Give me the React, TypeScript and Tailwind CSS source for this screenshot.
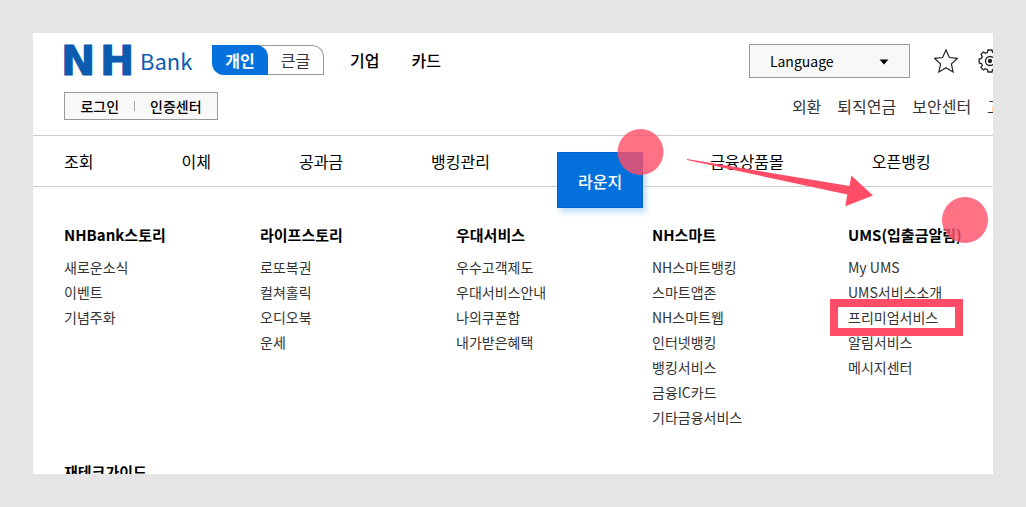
import { useState } from 'react'

const mainMenu = ['조회', '이체', '공과금', '뱅킹관리', '라운지', '금융상품몰', '오픈뱅킹']

const utilityLinks = ['외환', '퇴직연금', '보안센터', '고객센터']

const menuGroups = [
	{ title: 'NHBank스토리', items: ['새로운소식', '이벤트', '기념주화'] },
	{ title: '라이프스토리', items: ['로또복권', '컬쳐홀릭', '오디오북', '운세'] },
	{ title: '우대서비스', items: ['우수고객제도', '우대서비스안내', '나의쿠폰함', '내가받은혜택'] },
	{
		title: 'NH스마트',
		items: ['NH스마트뱅킹', '스마트앱존', 'NH스마트웹', '인터넷뱅킹', '뱅킹서비스', '금융IC카드', '기타금융서비스'],
	},
	{
		title: 'UMS(입출금알림)',
		items: ['My UMS', 'UMS서비스소개', '프리미엄서비스', '알림서비스', '메시지센터'],
	},
	{ title: '재테크가이드', items: [] },
]

export default function App() {
	const [active, setActive] = useState('라운지')

	return (
		<div className="flex h-screen bg-[#e5e5e5] p-[33px] font-['Noto_Sans_CJK_KR',sans-serif] text-black">
			<div className="relative min-w-0 flex-1 overflow-hidden bg-white">
				<Header />
				<MainNav active={active} onSelect={setActive} />
				<SubMenu />
				<Annotations />
			</div>
		</div>
	)
}

function Header() {
	return (
		<header className="flex h-[102px] justify-between pt-[11px] pl-[31px]">
			<div>
				<div className="flex h-8 items-center">
					<Logo />
					<div className="ml-5 flex h-[30px] text-base leading-7">
						<button className="relative z-10 w-14 rounded-tr-xl rounded-bl-xl bg-[#0470dc] font-bold text-white">개인</button>
						<button className="-ml-3 w-[68px] rounded-tr-xl border border-l-0 border-[#999] pl-3 text-[#333]">큰글</button>
					</div>
					<a href="#" className="ml-[26px] text-base font-medium">기업</a>
					<a href="#" className="ml-8 text-base font-medium">카드</a>
				</div>
				<div className="mt-4 flex h-7 w-[154px] items-center justify-center gap-[15px] border border-[#999] bg-[#f8f8f8] text-sm font-medium">
					<a href="#">로그인</a>
					<span className="h-[10px] w-px bg-[#aaa]" />
					<a href="#">인증센터</a>
				</div>
			</div>

			{/* Runs past the right edge of the panel */}
			<div className="-mr-[53px] shrink-0">
				<div className="-ml-[43px] flex h-[34px] items-center">
					<div className="relative">
						<select
							aria-label="Language"
							className="h-[34px] w-[161px] appearance-none border border-[#999] bg-[#f8f8f8] pl-5 text-sm"
						>
							<option>Language</option>
						</select>
						<svg className="pointer-events-none absolute top-[15px] right-[21px]" width="10" height="6" viewBox="0 0 10 6">
							<path d="M0.5 0.5h9L5 5.5z" fill="#000" />
						</svg>
					</div>
					<button aria-label="즐겨찾기" className="ml-6">
						<StarIcon />
					</button>
					<button aria-label="설정" className="ml-5">
						<GearIcon />
					</button>
				</div>
				<nav className="mt-4 flex gap-4 text-base leading-6 text-[#333]">
					{utilityLinks.map((link) => (
						<a key={link} href="#">{link}</a>
					))}
				</nav>
			</div>
		</header>
	)
}

function Logo() {
	return (
		<a href="#" className="flex w-32 items-center text-[#0b5cb0]">
			<svg className="overflow-visible" width="128" height="32" viewBox="0 0 128 32" fill="currentColor">
				<text x="-3" y="31" fontFamily="DejaVu Sans" fontWeight="700" fontSize="41" stroke="currentColor" strokeWidth="1">N</text>
				<text x="36" y="31" fontFamily="DejaVu Sans" fontWeight="700" fontSize="41" stroke="currentColor" strokeWidth="1">H</text>
				<text x="76" y="26" fontFamily="Noto Sans CJK KR" fontSize="22">Bank</text>
			</svg>
		</a>
	)
}

function MainNav({ active, onSelect }: { active: string; onSelect: (item: string) => void }) {
	return (
		<nav className="flex h-[52px] items-start gap-[88px] border-y border-[#ccc] pl-[31px] text-base whitespace-nowrap">
			{mainMenu.map((item) =>
				item === active ? (
					<button
						key={item}
						className="relative -mx-[21px] mt-4 h-14 shrink-0 border border-[#0560cf] bg-[#0470dc] px-5 pt-px font-medium text-white shadow-[3px_4px_6px_#bcdcf5]"
					>
						{item}
					</button>
				) : (
					<button key={item} onClick={() => onSelect(item)} className="h-[50px] shrink-0">
						{item}
					</button>
				),
			)}
		</nav>
	)
}

function SubMenu() {
	return (
		<div className="-mr-[51px] grid grid-cols-5 gap-y-[30px] pt-9 pl-[31px]">
			{menuGroups.map((group) => (
				<section key={group.title}>
					<h2 className="mb-2 text-[15px] leading-6 font-bold">{group.title}</h2>
					<ul className="text-sm leading-[25px] text-[#333]">
						{group.items.map((item) => (
							<li key={item}>
								<a href="#">{item}</a>
							</li>
						))}
					</ul>
				</section>
			))}
		</div>
	)
}

// Red guide marks drawn over the menu
function Annotations() {
	return (
		<svg className="pointer-events-none absolute top-0 left-0" width="960" height="441" viewBox="0 0 960 441" fill="#ff4d67">
			<circle cx="607.5" cy="119" r="23" opacity="0.8" />
			<circle cx="932" cy="187" r="23" opacity="0.8" />
			<path d="M654 126L816.5 153L818.300 142.500L840 162.500L812.300 173.300L814.300 161.500L654 127z" />
			<rect x="801" y="270" width="125" height="29" fill="none" stroke="#ff4d67" strokeWidth="8" />
		</svg>
	)
}

function StarIcon() {
	return (
		<svg width="24" height="24" viewBox="0 0 24 24" fill="none" stroke="#222" strokeWidth="1.2">
			<path d="M12 1l3.400 7.500 8 .9-6 5.500 1.700 8.100-7.100-4.200L4.900 23l1.700-8.100-6-5.500 8-.9z" />
		</svg>
	)
}

function GearIcon() {
	return (
		<svg width="24" height="24" viewBox="0 0 24 24" fill="none" stroke="#222" strokeWidth="1.3">
			<path d="M9.500 3.300L10 1h4l.5 2.300 2.200 1 2-1.300 2.300 2.300-1.300 2.200.9 2 2.200.5v4l-2.200.5-.9 2 1.300 2.200-2.300 2.300-2-1.300-2.200 1L14 23h-4l-.5-2.300-2.200-1-2 1.300L3 18.700l1.300-2.200-.9-2L1.200 14v-4l2.200-.5.9-2L3 5.300 5.300 3l2 1.300z" />
			<circle cx="12" cy="12" r="4.500" />
			<circle cx="12" cy="12" r="1.500" fill="#222" />
		</svg>
	)
}
